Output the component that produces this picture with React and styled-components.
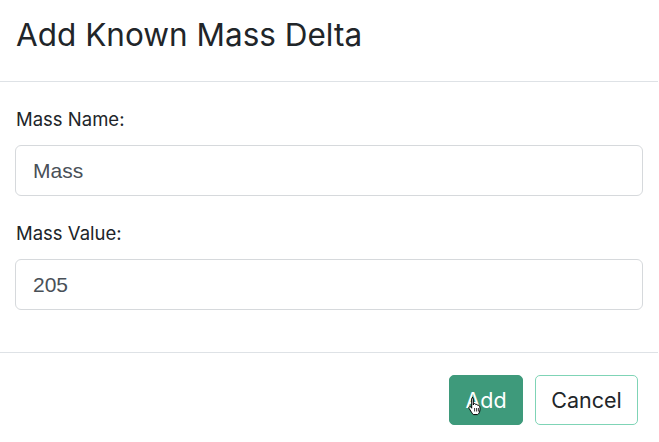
import React from "react";
import styled, { createGlobalStyle } from "styled-components";

const Global = createGlobalStyle`
  html, body { margin: 0; padding: 0; background: #fff; }
  body { font-family: Inter, "Noto Sans", sans-serif; color: #212529; }
`;

const Modal = styled.div`
  width: 658px;
  background: #fff;
`;

const Header = styled.div`
  height: 82px;
  padding: 16px 16px 0;
  display: flex;
  align-items: flex-start;
  border-bottom: 1px solid #dee2e6;
  box-sizing: border-box;
`;

const Title = styled.h1`
  margin: 0;
  font-size: 31.5px;
  line-height: 38px;
  font-weight: 400;
  color: #212529;
`;

const Body = styled.div`
  padding: 26px 15px 42px 15px;
  display: flex;
  flex-direction: column;
  gap: 26px;
  border-bottom: 1px solid #dee2e6;
`;

const Field = styled.div`
  display: flex;
  flex-direction: column;
  gap: 15px;
`;

const Label = styled.label`
  font-size: 18.5px;
  color: #212529;
  padding-left: 1px;
`;

const Input = styled.input`
  height: 51px;
  box-sizing: border-box;
  border: 1px solid #d6d9dc;
  border-radius: 6px;
  padding: 0 17px;
  font-family: "Liberation Sans", Arial, sans-serif;
  font-size: 21px;
  color: #495057;
  outline: none;
`;

const Footer = styled.div`
  display: flex;
  justify-content: flex-end;
  gap: 12px;
  padding: 22px 20px 0 0;
`;

const Button = styled.button`
  position: relative;
  height: 50px;
  box-sizing: border-box;
  border-radius: 5px;
  padding: 0;
  font-family: Inter, "Noto Sans", sans-serif;
  font-size: 21.5px;
  cursor: pointer;
  background: ${p => (p.$primary ? "#3e9a7b" : "#fff")};
  color: ${p => (p.$primary ? "#fff" : "#212529")};
  border: 1px solid ${p => (p.$primary ? "#3e9a7b" : "#7fd4b6")};
`;

const Cursor = styled.svg`
  position: absolute;
  left: 17px;
  top: 20px;
`;

export default function App() {
  return (
    <>
      <Global />
      <Modal>
        <Header>
          <Title>Add Known Mass Delta</Title>
        </Header>
        <Body>
          <Field>
            <Label>Mass Name:</Label>
            <Input defaultValue="Mass" />
          </Field>
          <Field>
            <Label>Mass Value:</Label>
            <Input defaultValue="205" />
          </Field>
        </Body>
        <Footer>
          <Button $primary style={{ width: 74 }}>
            Add
            <Cursor width="16" height="20" viewBox="0 0 16 20">
              <path
                d="M5 1.5c.8 0 1.3.6 1.3 1.3V9l.4-1.2c.6-.5 1.6-.3 1.9.4l.2.5c.6-.5 1.6-.3 1.9.4l.1.4c.6-.4 1.5-.1 1.8.5.5 1 .5 3.3.2 5-.3 1.7-1.2 3-2.2 3.6H6.3c-.7-.6-1.6-2-2.6-3.6L2.1 12.4c-.5-.8 0-1.7.9-1.7.5 0 .9.3 1.2.7l.5.8V2.8c0-.7.5-1.3 1.3-1.3z"
                fill="#fff"
                stroke="#000"
                strokeWidth="1"
              />
              <path d="M7.6 12v3.5M9.6 12v3.5M11.4 12v3.5" stroke="#000" strokeWidth="0.8" />
            </Cursor>
          </Button>
          <Button style={{ width: 103 }}>Cancel</Button>
        </Footer>
      </Modal>
    </>
  );
}
